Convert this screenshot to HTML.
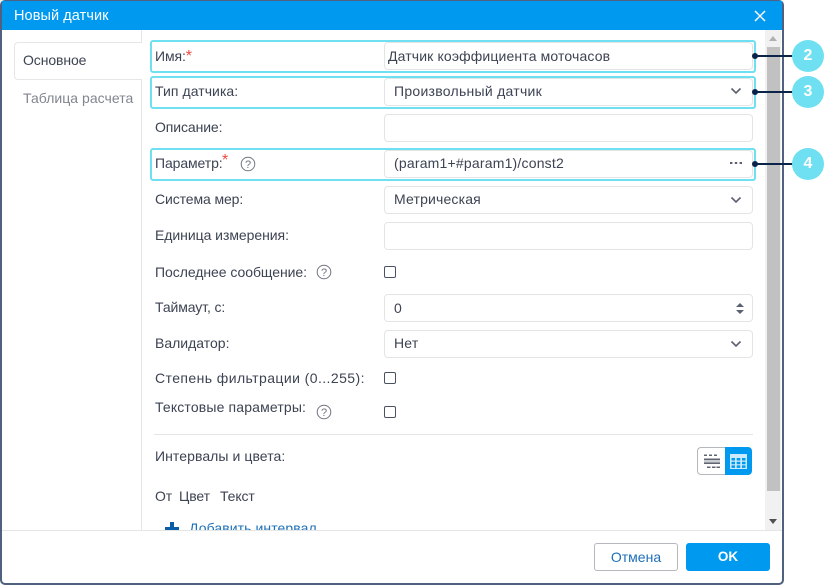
<!DOCTYPE html>
<html lang="ru"><head><meta charset="utf-8">
<style>
html,body{margin:0;padding:0;background:#fff}
#p{position:relative;width:824px;height:585px;overflow:hidden;background:#fff;font-family:"Liberation Sans",sans-serif;font-size:14px;color:#3c4352}
#p div,#p span.a,#p svg{position:absolute;box-sizing:border-box}
.dlg{left:0;top:0;width:784px;height:585px;border:2px solid #4f6080;border-top-width:1px;border-radius:5px;background:#fff}
.hd{left:2px;top:1px;width:780px;height:29px;background:#0099f0;color:#fff;font-size:14.5px;font-weight:400;line-height:30px;padding-left:12px;letter-spacing:.08px}
.t{white-space:nowrap;line-height:18px;letter-spacing:-.1px}
.in{left:384px;width:369px;height:28px;border:1px solid #e2e4e6;border-radius:4px;background:#fff;line-height:24px;padding-left:9px;white-space:nowrap;letter-spacing:.2px}
.hl{left:149.5px;width:606.5px;height:33px;border:2px solid #6fe0f1;border-radius:3px}
.cb{left:384px;width:12px;height:12px;border:1.5px solid #4a5160;border-radius:2px;background:#fff}
.bub{left:792px;width:32px;height:32px;border-radius:50%;background:#6fe0f1;color:#fff;font-weight:700;font-size:16px;line-height:32px;text-align:center}
.ln{left:755px;width:38px;height:2px;background:#0b2348}
.dot{left:752px;width:6px;height:6px;border-radius:50%;background:#0b2348}
</style></head><body>
<div id="p">
<div class="dlg"></div>
<div class="hd">Новый датчик</div>
<svg style="left:754px;top:10px" width="12" height="12" viewBox="0 0 12 12"><path d="M1 1L11 11M11 1L1 11" stroke="#fff" stroke-width="1.5" fill="none"/></svg>

<div style="left:141px;top:30px;width:1px;height:500px;background:#e4e6e8"></div>
<div style="left:14px;top:42px;width:128px;height:38px;border:1px solid #e4e6e8;border-right:none;border-radius:4px 0 0 4px;background:#fff"></div>
<div class="t" style="left:23px;top:51px">Основное</div>
<div class="t" style="left:23px;top:89px;color:#80858f;letter-spacing:.03px">Таблица расчета</div>

<div class="hl" style="top:39.5px"></div>
<div class="hl" style="top:75.5px"></div>
<div class="hl" style="top:147.5px"></div>

<div class="t" style="left:155px;top:47px">Имя:<span style="color:#f0483e;font-size:16px">*</span></div>
<div class="t" style="left:155px;top:82px;letter-spacing:.06px">Тип датчика:</div>
<div class="t" style="left:155px;top:118px">Описание:</div>
<div class="t" style="left:155px;top:154px">Параметр:</div>
<div style="left:222px;top:152px;color:#f0483e;font-size:16px;line-height:18px">*</div>
<div class="t" style="left:155px;top:190px">Система мер:</div>
<div class="t" style="left:155px;top:226px;letter-spacing:-.05px">Единица измерения:</div>
<div class="t" style="left:155px;top:263px;letter-spacing:-.05px">Последнее сообщение:</div>
<div class="t" style="left:155px;top:298px">Таймаут, с:</div>
<div class="t" style="left:155px;top:333.5px;letter-spacing:0">Валидатор:</div>
<div class="t" style="left:155px;top:369px;letter-spacing:.42px">Степень фильтрации (0...255):</div>
<div class="t" style="left:155px;top:398px;letter-spacing:.15px">Текстовые параметры:</div>
<div class="t" style="left:155px;top:447px;letter-spacing:.07px">Интервалы и цвета:</div>
<div class="t" style="left:155px;top:487px">От</div>
<div class="t" style="left:179px;top:487px">Цвет</div>
<div class="t" style="left:220px;top:487px">Текст</div>

<svg style="left:240px;top:156px" width="16" height="16" viewBox="0 0 16 16"><circle cx="8" cy="8" r="6.8" fill="none" stroke="#6f747f" stroke-width="1"/><text x="8" y="12" font-family="Liberation Sans" font-size="11" fill="#6f747f" text-anchor="middle">?</text></svg>
<svg style="left:316px;top:264px" width="16" height="16" viewBox="0 0 16 16"><circle cx="8" cy="8" r="6.8" fill="none" stroke="#6f747f" stroke-width="1"/><text x="8" y="12" font-family="Liberation Sans" font-size="11" fill="#6f747f" text-anchor="middle">?</text></svg>
<svg style="left:316px;top:404px" width="16" height="16" viewBox="0 0 16 16"><circle cx="8" cy="8" r="6.8" fill="none" stroke="#6f747f" stroke-width="1"/><text x="8" y="12" font-family="Liberation Sans" font-size="11" fill="#6f747f" text-anchor="middle">?</text></svg>

<div class="in" style="top:42px;padding-left:3px;line-height:26px;letter-spacing:.14px">Датчик коэффициента моточасов</div>
<div class="in" style="top:78px;letter-spacing:.27px">Произвольный датчик</div>
<div class="in" style="top:114px"></div>
<div class="in" style="top:150px">(param1+#param1)/const2</div>
<div class="in" style="top:186px;letter-spacing:.17px">Метрическая</div>
<div class="in" style="top:222px"></div>
<div class="in" style="top:294px;line-height:26px">0</div>
<div class="in" style="top:330px">Нет</div>

<svg style="left:730px;top:87px" width="12" height="8" viewBox="0 0 12 8"><path d="M1.5 1.5L6 6L10.5 1.5" stroke="#5a6170" stroke-width="1.6" fill="none"/></svg>
<svg style="left:730px;top:196px" width="12" height="8" viewBox="0 0 12 8"><path d="M1.5 1.5L6 6L10.5 1.5" stroke="#5a6170" stroke-width="1.6" fill="none"/></svg>
<svg style="left:730px;top:340px" width="12" height="8" viewBox="0 0 12 8"><path d="M1.5 1.5L6 6L10.5 1.5" stroke="#5a6170" stroke-width="1.6" fill="none"/></svg>
<svg style="left:730px;top:161px" width="12" height="4" viewBox="0 0 12 4"><path d="M0 1h2.400v2H0zM4.800 1h2.400v2H4.800zM9.600 1H12v2H9.600z" fill="#5a6170"/></svg>
<svg style="left:735px;top:303px" width="10" height="11" viewBox="0 0 10 11"><path d="M5 0L9 4H1zM5 11L1 7H9z" fill="#5a6170"/></svg>

<div class="cb" style="top:266px"></div>
<div class="cb" style="top:372px"></div>
<div class="cb" style="top:406px"></div>

<div style="left:154px;top:434px;width:599px;height:1px;background:#e4e6e8"></div>

<div style="left:697px;top:447px;width:29px;height:28px;border:1px solid #b5b8bd;border-right:none;border-radius:4px 0 0 4px;background:#fff"></div>
<svg style="left:703px;top:454px" width="18" height="15" viewBox="0 0 18 15"><path d="M1 .5h3v1.500H1zM6 .5h3v1.500H6zM11 .5h3v1.500h-3zM1 4.500h16v1.500H1zM1 8.500h16v1.500H1zM4 12.500h3.500v1.500H4zM9 12.500h3.500v1.500H9zM13.500 12.500H17v1.500h-3.500z" fill="#5f6672"/><path d="M1 6h16v2.500H1z" fill="#c9ccd1"/></svg>
<div style="left:725px;top:447px;width:27px;height:28px;background:#0099f0;border-radius:0 4px 4px 0"></div>
<svg style="left:730px;top:454px" width="17" height="15" viewBox="0 0 17 15"><rect width="17" height="15" fill="#cdeafc"/><path d="M1.500 4h3.500v2.500H1.500zM6.700 4h3.600v2.500H6.700zM12 4h3.500v2.500H12zM1.500 7.700h3.500v2.500H1.500zM6.700 7.700h3.600v2.500H6.700zM12 7.700h3.500v2.500H12zM1.500 11.400h3.500v2.500H1.500zM6.700 11.400h3.600v2.500H6.700zM12 11.400h3.500v2.500H12z" fill="#0099f0"/></svg>

<div style="left:142px;top:512px;width:623px;height:18px;overflow:hidden">
  <div style="left:23px;top:14.500px;width:14px;height:3.500px;background:#0a5ea8"></div>
  <div style="left:28px;top:9.500px;width:4px;height:13px;background:#0a5ea8"></div>
  <div class="t" style="left:47px;top:7px;color:#1d6fb8;letter-spacing:.08px">Добавить интервал</div>
</div>

<div style="left:765px;top:30px;width:16px;height:500px;background:#f1f1f1"></div>
<div style="left:767px;top:47px;width:13px;height:444px;background:#c1c1c1"></div>
<svg style="left:769px;top:36px" width="8" height="5" viewBox="0 0 8 5"><path d="M4 0L8 5H0z" fill="#b0b0b0"/></svg>
<svg style="left:769px;top:519px" width="8" height="5" viewBox="0 0 8 5"><path d="M0 0H8L4 5z" fill="#505050"/></svg>

<div style="left:2px;top:530px;width:780px;height:1px;background:#e4e6e8"></div>
<div style="left:594px;top:543px;width:84px;height:28px;border:1px solid #b5b8bd;border-radius:3px;background:#fff;color:#1d6fb8;line-height:26px;text-align:center">Отмена</div>
<div style="left:686px;top:543px;width:84px;height:28px;border-radius:3px;background:#0099f0;color:#fff;font-weight:700;font-size:13.500px;line-height:28px;text-align:center">OK</div>

<div class="ln" style="top:55px"></div><div class="dot" style="top:53px"></div><div class="bub" style="top:40px">2</div>
<div class="ln" style="top:91px"></div><div class="dot" style="top:89px"></div><div class="bub" style="top:76px">3</div>
<div class="ln" style="top:163px"></div><div class="dot" style="top:161px"></div><div class="bub" style="top:148px">4</div>
</div>
</body></html>
